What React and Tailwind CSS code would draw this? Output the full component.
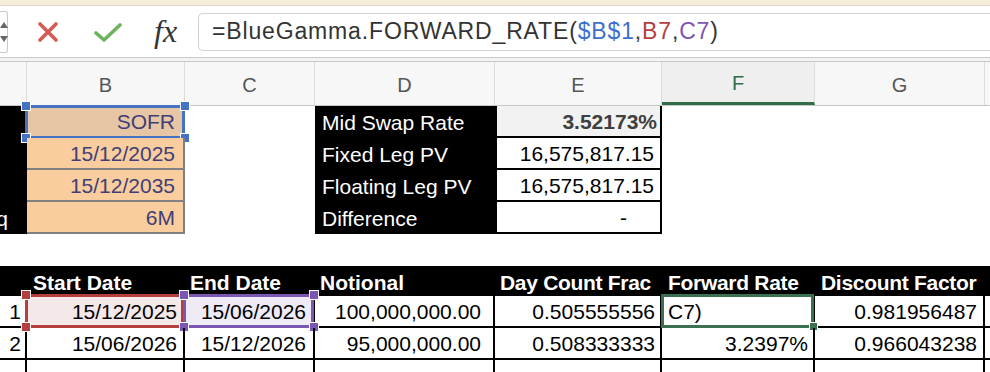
import React from 'react';

const W = { a: 'w-[27px]', b: 'w-[158px]', c: 'w-[130px]', d: 'w-[180px]', e: 'w-[167px]', f: 'w-[153px]', g: 'w-[170px]', h: 'w-[5px]' };

function Handle({ className }) {
  return <div className={`absolute w-[10px] h-[10px] border border-white ${className}`} />;
}

function ColHeader({ w, label, active }) {
  return (
    <div
      className={`${w} h-full flex items-center justify-center border-r border-[#dcdcdc] text-[20px] pt-[2px] ${
        active ? 'bg-[#efefef] text-[#2f6e46] border-b-[3px] border-b-[#2f6e46]' : 'text-[#555]'
      }`}
    >
      {label}
    </div>
  );
}

function TableRow({ n, start, end, notional, dcf, fwd, df, first }) {
  return (
    <div className="flex h-[32px] border-b-2 border-black">
      <div className={`${W.a} flex items-center justify-end pr-[4px] border-r-2 border-black pt-[2px]`}>{n}</div>
      <div className={`${W.b} relative flex items-center justify-end pr-[6px] border-r-2 border-black pt-[2px] ${first ? 'bg-[#f5e8e8]' : ''}`}>
        {start}
        {first && (
          <>
            <div className="absolute -left-[2px] -top-[2px] -right-[1px] -bottom-[2px] border-[3px] border-[#b3403d]" />
            <Handle className="bg-[#b3403d] -left-[6px] -top-[6px]" />
            <Handle className="bg-[#b3403d] -left-[6px] -bottom-[6px]" />
          </>
        )}
      </div>
      <div className={`${W.c} relative flex items-center justify-end pr-[7px] border-r-2 border-black pt-[2px] ${first ? 'bg-[#eeeaf6]' : ''}`}>
        {end}
        {first && (
          <>
            <div className="absolute -left-[2px] -top-[2px] -right-[1px] -bottom-[2px] border-[3px] border-[#7b56b2]" />
            <Handle className="bg-[#7b56b2] -left-[6px] -top-[6px]" />
            <Handle className="bg-[#7b56b2] -left-[6px] -bottom-[6px]" />
            <Handle className="bg-[#7b56b2] -right-[6px] -top-[6px]" />
            <Handle className="bg-[#7b56b2] -right-[6px] -bottom-[6px]" />
          </>
        )}
      </div>
      <div className={`${W.d} flex items-center justify-end pr-[12px] border-r-2 border-black pt-[2px]`}>{notional}</div>
      <div className={`${W.e} flex items-center justify-end pr-[5px] border-r-2 border-black pt-[2px]`}>{dcf}</div>
      <div className={`${W.f} relative flex items-center pt-[2px] border-r-2 border-black ${first ? 'justify-start pl-[6px]' : 'justify-end pr-[5px]'}`}>
        {fwd}
        {first && (
          <>
            <div className="absolute -left-[1px] -top-[2px] -right-[1px] -bottom-[2px] border-[3px] border-[#3b7150]" />
            <div className="absolute w-[9px] h-[9px] bg-[#3b7150] border border-white -right-[5px] -bottom-[5px]" />
          </>
        )}
      </div>
      <div className={`${W.g} flex items-center justify-end pr-[6px] border-r-2 border-black pt-[2px]`}>{df}</div>
      <div className={W.h} />
    </div>
  );
}

export default function App() {
  return (
    <div className="w-[990px] h-[372px] overflow-hidden bg-white text-black font-['Liberation_Sans',Arial,sans-serif]">
      {/* top strip */}
      <div className="h-[6px] bg-[#f6eedb] border-b border-[#ddd6c6]" />

      {/* formula bar */}
      <div className="h-[51px] flex items-center">
        <div className="w-[8px] h-[42px] border border-l-0 border-[#c8c8c8] rounded-r-[3px] flex flex-col items-center justify-center gap-[8px]">
          <div className="w-0 h-0 border-l-[4px] border-r-[4px] border-b-[6px] border-l-transparent border-r-transparent border-b-[#666]" />
          <div className="w-0 h-0 border-l-[4px] border-r-[4px] border-t-[6px] border-l-transparent border-r-transparent border-t-[#666]" />
        </div>
        <svg className="ml-[28px]" width="24" height="24" viewBox="0 0 24 24">
          <path d="M4 4L20 20M20 4L4 20" stroke="#d65a54" strokeWidth="3.6" strokeLinecap="round" />
        </svg>
        <svg className="ml-[33px]" width="30" height="24" viewBox="0 0 30 24">
          <path d="M3 13L11 20L27 5" stroke="#6cb35d" strokeWidth="3.6" strokeLinecap="round" strokeLinejoin="round" fill="none" />
        </svg>
        <div className="ml-[31px] w-[40px] text-[32px] italic text-[#333] font-['Liberation_Serif',serif] leading-none -mt-[2px]">
          fx
        </div>
        <div className="ml-[4px] flex-1 h-[38px] border border-r-0 border-[#d2d2d2] rounded-l-[5px] flex items-center pl-[13px] text-[23px] tracking-[0.85px] text-[#333]">
          <span>=BlueGamma.FORWARD_RATE(</span>
          <span className="text-[#3f6fce]">$B$1</span>
          <span>,</span>
          <span className="text-[#b63f3c]">B7</span>
          <span>,</span>
          <span className="text-[#7f55b5]">C7</span>
          <span>)</span>
        </div>
      </div>

      {/* separator */}
      <div className="h-[5px] border-t border-b border-[#c9c9c9] bg-[#f3f3f3]" />

      {/* column headers */}
      <div className="flex h-[44px] bg-[#f7f7f7] border-b border-[#c6c6c6]">
        <ColHeader w={W.a} label="" />
        <ColHeader w={W.b} label="B" />
        <ColHeader w={W.c} label="C" />
        <ColHeader w={W.d} label="D" />
        <ColHeader w={W.e} label="E" />
        <ColHeader w={W.f} label="F" active />
        <ColHeader w={W.g} label="G" />
        <div className={W.h} />
      </div>

      {/* inputs and summary block */}
      <div className="text-[21px]">
        {[
          { b: 'SOFR', d: 'Mid Swap Rate', e: '3.52173%' },
          { b: '15/12/2025', d: 'Fixed Leg PV', e: '16,575,817.15' },
          { b: '15/12/2035', d: 'Floating Leg PV', e: '16,575,817.15' },
          { b: '6M', d: 'Difference', e: '-' },
        ].map((r, i) => (
          <div key={i} className="flex h-[32px]">
            <div className={`${W.a} bg-black text-white overflow-hidden flex items-center justify-end pt-[2px]`}>
              {i === 3 && <span className="whitespace-nowrap pr-[19px]">Payment Freq</span>}
            </div>
            <div
              className={`${W.b} relative flex items-center justify-end pr-[8px] pt-[2px] text-[#3f3f76] border-r-2 border-b-2 border-[#808080] ${
                i === 0 ? 'bg-[#e7c6a5]' : 'bg-[#f9cd9e]'
              }`}
            >
              {r.b}
              {i === 0 && (
                <>
                  <div className="absolute -left-[2px] -top-[1px] -right-[2px] -bottom-[3px] border-[3px] border-[#4472c4]" />
                  <Handle className="bg-[#4472c4] -left-[6px] -top-[5px]" />
                  <Handle className="bg-[#4472c4] -right-[7px] -top-[5px]" />
                  <Handle className="bg-[#4472c4] -left-[6px] -bottom-[7px]" />
                  <Handle className="bg-[#4472c4] -right-[7px] -bottom-[7px]" />
                </>
              )}
            </div>
            <div className={W.c} />
            <div className={`${W.d} bg-black text-white flex items-center pl-[7px] pt-[2px]`}>{r.d}</div>
            <div
              className={`${W.e} flex items-center justify-end pt-[2px] border-l-2 border-r-2 border-b-2 border-black ${
                i === 0 ? 'bg-[#f2f2f2] font-bold text-[#3f3f3f] pr-[3px]' : i === 3 ? 'pr-[33px]' : 'pr-[6px]'
              }`}
            >
              {r.e}
            </div>
          </div>
        ))}

        {/* empty row */}
        <div className="h-[32px]" />

        {/* table header */}
        <div className="flex h-[30px] bg-black text-white font-bold">
          <div className={W.a} />
          <div className={`${W.b} flex items-center pl-[6px] pt-[3px]`}>Start Date</div>
          <div className={`${W.c} flex items-center pl-[5px] pt-[3px]`}>End Date</div>
          <div className={`${W.d} flex items-center pl-[5px] pt-[3px]`}>Notional</div>
          <div className={`${W.e} flex items-center pl-[5px] pt-[3px] tracking-[-0.3px]`}>Day Count Frac</div>
          <div className={`${W.f} flex items-center pl-[6px] pt-[3px] tracking-[-0.3px]`}>Forward Rate</div>
          <div className={`${W.g} flex items-center pl-[6px] pt-[3px] tracking-[-0.3px] whitespace-nowrap`}>Discount Factor</div>
          <div className={W.h} />
        </div>

        <TableRow n="1" start="15/12/2025" end="15/06/2026" notional="100,000,000.00" dcf="0.505555556" fwd="C7)" df="0.981956487" first />
        <TableRow n="2" start="15/06/2026" end="15/12/2026" notional="95,000,000.00" dcf="0.508333333" fwd="3.2397%" df="0.966043238" />
        <div className="flex h-[32px]">
          <div className={`${W.a} border-r-2 border-black`} />
          <div className={`${W.b} border-r-2 border-black`} />
          <div className={`${W.c} border-r-2 border-black`} />
          <div className={`${W.d} border-r-2 border-black`} />
          <div className={`${W.e} border-r-2 border-black`} />
          <div className={`${W.f} border-r-2 border-black`} />
          <div className={`${W.g} border-r-2 border-black`} />
        </div>
      </div>
    </div>
  );
}
